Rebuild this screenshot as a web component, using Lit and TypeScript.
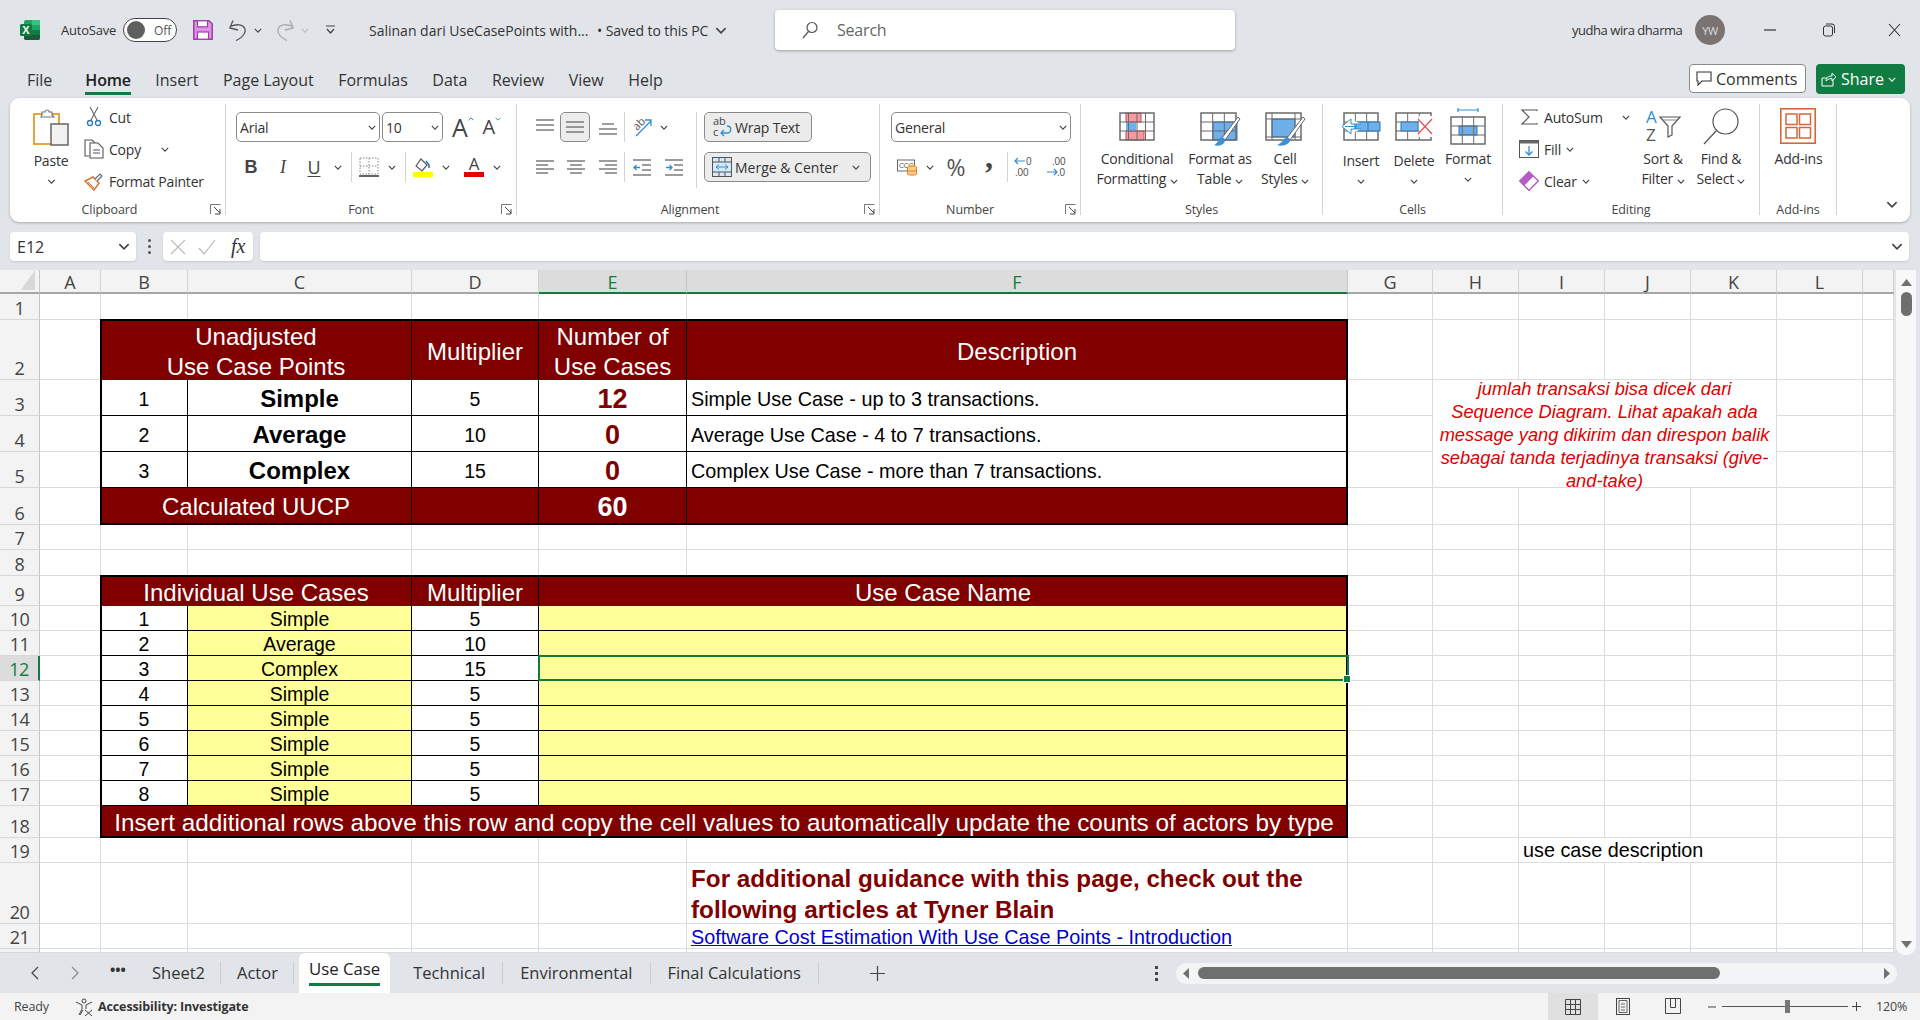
import { LitElement, html, css, svg } from 'lit';
import { customElement } from 'lit/decorators.js';

const UI_FONT = css`"Open Sans", "Noto Sans", sans-serif`;
const GREEN = css`#107c41`;

const chev = (w = 8, color = '#444') => html`<svg width=${w} height=${Math.round(w * 0.6)} viewBox="0 0 10 6"><path d="M1 1l4 4 4-4" fill="none" stroke=${color} stroke-width="1.4"/></svg>`;
const caretUp = html`<svg width="6" height="4" viewBox="0 0 10 6"><path d="M1 5l4-4 4 4" fill="none" stroke="#2e75b6" stroke-width="1.6"/></svg>`;

const lines = (x1: number, x2: number, ys: number[], color = '#666') =>
  ys.map((y) => svg`<path d="M${x1} ${y}H${x2}" stroke=${color} stroke-width="1.3"/>`);

const gridLines = (x: number, y: number, w: number, h: number, nc: number, nr: number) => svg`
  <rect x=${x} y=${y} width=${w} height=${h} fill="none" stroke="#6b6b6b" stroke-width="1.5"/>
  ${Array.from({ length: nc - 1 }, (_, i) => svg`<path d="M${x + ((i + 1) * w) / nc} ${y}V${y + h}" stroke="#6b6b6b"/>`)}
  ${Array.from({ length: nr - 1 }, (_, i) => svg`<path d="M${x} ${y + ((i + 1) * h) / nr}H${x + w}" stroke="#6b6b6b"/>`)}`;

const icons = {
  logo: html`<svg width="20" height="20" viewBox="0 0 20 20">
    <rect x="4" y="0" width="16" height="20" rx="2" fill="#21a366"/>
    <rect x="12" y="0" width="8" height="5" fill="#33c481"/><rect x="12" y="10" width="8" height="5" fill="#107c41"/>
    <path d="M4 15h16v3a2 2 0 0 1-2 2H6a2 2 0 0 1-2-2z" fill="#185c37"/>
    <rect x="0" y="4" width="12" height="12" rx="1.5" fill="#0f7b3f"/>
    <text x="6" y="14" text-anchor="middle" font-family="Liberation Sans" font-weight="700" font-size="11" fill="#fff">X</text>
  </svg>`,
  save: html`<svg width="20" height="20" viewBox="0 0 20 20">
    <path d="M.8.8h15l3.4 3v15.4H.8z" fill="#e391e6" stroke="#9c3fa8" stroke-width="1.5"/>
    <rect x="4.5" y=".8" width="10" height="6" fill="#fff" stroke="#9c3fa8" stroke-width="1.2"/>
    <rect x="4.5" y="12" width="11" height="7.2" fill="#fff" stroke="#9c3fa8" stroke-width="1.2"/>
  </svg>`,
  undo: (c: string, flip = false) => html`<svg width="18" height="21" viewBox="0 0 18 21" class=${flip ? 'flip' : ''}>
    <path d="M4 .5L.8 8 9 10M1 6.5C16 0 23 13 7 20.5" fill="none" stroke=${c} stroke-width="1.3"/>
  </svg>`,
  qat: html`<svg width="9" height="10" viewBox="0 0 9 10"><path d="M0 1h9M1 4l3.5 4 3.5-4" fill="none" stroke="#444" stroke-width="1.2"/></svg>`,
  search: html`<svg width="16" height="18" viewBox="0 0 16 18"><circle cx="10" cy="6.5" r="5" fill="none" stroke="#555" stroke-width="1.2"/><path d="M6.5 10.5L1 17" stroke="#555" stroke-width="1.2"/></svg>`,
  comment: html`<svg width="16" height="15" viewBox="0 0 16 15"><path d="M1 1h14v9H6l-4 4v-4H1z" fill="none" stroke="#333" stroke-width="1.1"/></svg>`,
  share: html`<svg width="16" height="15" viewBox="0 0 16 15"><path d="M12 8v6H1V6h5M5 9c0-4 3-5 6-5V1l4 4-4 4V6.5c-2 0-4 .5-6 2.5z" fill="none" stroke="#fff" stroke-width="1"/></svg>`,
  paste: html`<svg width="36" height="38" viewBox="0 0 36 38">
    <path d="M1 6h25v30H1z" fill="#fff" stroke="#e8a33d" stroke-width="2"/>
    <path d="M9 7V4h3a2 2 0 0 1 4 0h3v3l2 2H8z" fill="#fff" stroke="#777" stroke-width="1.2"/>
    <rect x="18" y="16" width="17" height="21" fill="#f2f2f2" stroke="#666" stroke-width="1.5"/>
  </svg>`,
  cut: html`<svg width="14" height="20" viewBox="0 0 14 20">
    <path d="M3 0l7 13M11 0L4 13" stroke="#666" fill="none" stroke-width="1.1"/>
    <circle cx="3" cy="16" r="2.5" fill="none" stroke="#2e75b6" stroke-width="1.3"/><circle cx="11" cy="16" r="2.5" fill="none" stroke="#2e75b6" stroke-width="1.3"/>
  </svg>`,
  copy: html`<svg width="20" height="20" viewBox="0 0 20 20">
    <path d="M5 17H1V1h7l3 3" fill="#fff" stroke="#555" stroke-width="1.1"/>
    <path d="M6 4h8l5 5v10H6z" fill="#fff" stroke="#555" stroke-width="1.1"/>
    <path d="M9 11h7M9 14h7" stroke="#555"/>
  </svg>`,
  painter: html`<svg width="20" height="19" viewBox="0 0 20 19">
    <path d="M1 9l8-4 6 6-5 7z" fill="#fff" stroke="#d9782d" stroke-width="1.5"/>
    <path d="M11 7l5-5 2 2-5 5" fill="#fff" stroke="#666" stroke-width="1.1"/><path d="M4 10l6 6" stroke="#d9782d"/>
  </svg>`,
  launcher: html`<svg width="11" height="11" viewBox="0 0 11 11"><path d="M.5 10V.5H10.5" fill="none" stroke="#777"/><path d="M4 3l6 6M10 5v5H5" fill="none" stroke="#444"/></svg>`,
  border: html`<svg width="20" height="20" viewBox="0 0 20 20"><path d="M1 1h18v16H1zM10 1v16M1 9h18" fill="none" stroke="#888" stroke-dasharray="1.5 1.5"/><path d="M0 19h20" stroke="#333" stroke-width="1.5"/></svg>`,
  fill: html`<svg width="20" height="21" viewBox="0 0 20 21"><path d="M3 9l5-7 6 6-5 6z" fill="#fff" stroke="#555" stroke-width="1.2"/><path d="M13 4l3 4v3" fill="none" stroke="#2e75b6" stroke-width="1.6"/><rect y="15" width="20" height="5" fill="#ffff00"/></svg>`,
  color: html`<svg width="20" height="21" viewBox="0 0 20 21"><text x="10" y="13" text-anchor="middle" font-family="Open Sans" font-size="17" fill="#444">A</text><rect y="15" width="20" height="5" fill="#e60000"/></svg>`,
  orient: html`<svg width="21" height="19" viewBox="0 0 21 19"><text transform="translate(5 13) rotate(-45)" font-family="Open Sans" font-size="11" fill="#555">ab</text><path d="M4 18L19 3M13 2h6v6" fill="none" stroke="#2e8fd0" stroke-width="1.3"/></svg>`,
  indentL: html`<svg width="18" height="17" viewBox="0 0 18 17">${lines(0, 18, [1, 16])}${lines(9, 18, [6, 11])}<path d="M7 8.5H1M3.5 6L1 8.5 3.5 11" fill="none" stroke="#2e8fd0" stroke-width="1.3"/></svg>`,
  indentR: html`<svg width="18" height="17" viewBox="0 0 18 17">${lines(0, 18, [1, 16])}${lines(9, 18, [6, 11])}<path d="M1 8.5h6M4.5 6L7 8.5 4.5 11" fill="none" stroke="#2e8fd0" stroke-width="1.3"/></svg>`,
  wrap: html`<svg width="20" height="24" viewBox="0 0 20 24"><text x="1" y="10" font-family="Open Sans" font-size="11" fill="#444">ab</text><text x="1" y="21" font-family="Open Sans" font-size="11" fill="#444">c</text><path d="M15 11c5 0 5 7 0 7H9M12 15l-3 3 3 3" fill="none" stroke="#2e8fd0" stroke-width="1.3"/></svg>`,
  merge: html`<svg width="20" height="20" viewBox="0 0 20 20"><rect x=".5" y=".5" width="19" height="19" fill="#d6e9f8" stroke="#555"/><path d="M.5 5h19M.5 15h19M7 .5V5M13 .5V5M7 15v4.5M13 15v4.5" stroke="#555"/><path d="M4 10h12M7 7.5L4 10l3 2.5M13 7.5l3 2.5-3 2.5" fill="none" stroke="#2e8fd0"/></svg>`,
  account: html`<svg width="20" height="20" viewBox="0 0 20 20"><rect x=".5" y="3" width="17" height="11" fill="#fff" stroke="#666"/><text x="2" y="11" font-family="Liberation Sans" font-size="7" fill="#555">CCC</text><ellipse cx="15" cy="10" rx="4.5" ry="2" fill="#f4a53a"/><path d="M10.5 10v7c0 1.5 9 1.5 9 0v-7" fill="#f9cf91" stroke="#e07f1a"/><path d="M10.5 13c0 1.5 9 1.5 9 0" fill="none" stroke="#e07f1a"/></svg>`,
  incDec: html`<svg width="22" height="24" viewBox="0 0 22 24"><text x="12" y="10" font-family="Liberation Sans" font-size="10" fill="#555">0</text><text x="1" y="21" font-family="Liberation Sans" font-size="10" fill="#555">.00</text><path d="M11 6H1M4 3L1 6l3 3" fill="none" stroke="#2e8fd0" stroke-width="1.2"/></svg>`,
  decDec: html`<svg width="20" height="24" viewBox="0 0 20 24"><text x="5" y="10" font-family="Liberation Sans" font-size="10" fill="#555">.00</text><text x="10" y="21" font-family="Liberation Sans" font-size="10" fill="#555">.0</text><path d="M0 17h10M7 14l3 3-3 3" fill="none" stroke="#2e8fd0" stroke-width="1.2"/></svg>`,
  cf: html`<svg width="36" height="29" viewBox="0 0 36 29">
    <rect x="7" y="1" width="15" height="9" fill="#f59aa3" stroke="#e0434b"/><rect x="7" y="19" width="18" height="9" fill="#f59aa3" stroke="#e0434b"/><rect x="7" y="10" width="10" height="9" fill="#6fb0e8"/>
    ${gridLines(1, 1, 34, 27, 4, 3)}</svg>`,
  fat: html`<svg width="40" height="36" viewBox="0 0 40 36">
    <rect x="13" y="10" width="24" height="18" fill="#6fb0e8" stroke="#2e75b6"/>${gridLines(1, 1, 35, 27, 3, 3)}
    <path d="M38 5L22 26l3 2L40 7z" fill="#fff" stroke="#666"/><path d="M14 33c6 2 11-1 11-5 0-2-3-3-5-2-2 2-2 5-6 7z" fill="#3f8fd6"/></svg>`,
  cstyle: html`<svg width="40" height="36" viewBox="0 0 40 36">
    <rect x="7" y="7" width="23" height="18" fill="#6fb0e8" stroke="#2e75b6"/>
    <rect x="1" y="1" width="35" height="27" fill="none" stroke="#6b6b6b" stroke-width="1.5"/><path d="M7 1v27M30 1v27M1 7h35M1 25h35" stroke="#6b6b6b" fill="none"/>
    <path d="M38 5L22 26l3 2L40 7z" fill="#fff" stroke="#666"/><path d="M12 33c6 2 13-1 13-5 0-2-3-3-5-2-2 2-3 5-8 7z" fill="#3f8fd6"/></svg>`,
  insert: html`<svg width="40" height="29" viewBox="0 0 40 29">${gridLines(3, 1, 34, 27, 3, 3)}
    <rect x="14" y="10" width="25" height="9" fill="#6fb0e8" stroke="#2e75b6"/><path d="M27 10v9" stroke="#2e75b6"/>
    <path d="M16 14.5H4M10 7L1 14.5 10 22M10 7v5h10M10 22v-5h10" fill="#fff" stroke="#2e8fd0"/></svg>`,
  del: html`<svg width="38" height="29" viewBox="0 0 38 29">${gridLines(1, 1, 35, 27, 3, 3)}
    <rect x="6" y="10" width="17" height="9" fill="#6fb0e8" stroke="#2e75b6"/><rect x="24" y="4" width="14" height="21" fill="#fff"/>
    <path d="M23 7l14 15M37 7L23 22" stroke="#e8525a" stroke-width="1.3"/></svg>`,
  format: html`<svg width="36" height="37" viewBox="0 0 36 37"><path d="M8 2h20M8 0v4M28 0v4" stroke="#2e8fd0" stroke-width="1.2"/>
    <rect x="9" y="18" width="18" height="9" fill="#6fb0e8" stroke="#2e75b6"/>${gridLines(1, 9, 34, 27, 3, 3)}</svg>`,
  sigma: html`<svg width="17" height="16" viewBox="0 0 17 16"><path d="M16 2V1H1l7 7-7 7h15v-1" fill="none" stroke="#555" stroke-width="1.2"/></svg>`,
  fillDown: html`<svg width="20" height="18" viewBox="0 0 20 18"><rect x=".5" y=".5" width="19" height="17" fill="#fff" stroke="#555"/><rect x=".5" y=".5" width="19" height="3" fill="#666"/><path d="M10 6v9M6.5 11.5L10 15l3.5-3.5" fill="none" stroke="#2e8fd0" stroke-width="1.3"/></svg>`,
  clear: html`<svg width="20" height="20" viewBox="0 0 20 20"><path d="M10 .7L19.3 10 10 19.3.7 10z" fill="#fff" stroke="#a64bb5" stroke-width="1.2"/><path d="M.7 10L10 .7l4.6 4.6L5.3 14.6z" fill="#b65cc6"/></svg>`,
  sort: html`<svg width="36" height="36" viewBox="0 0 36 36"><text x="1" y="15" font-family="Open Sans" font-size="17" fill="#2e8fd0">A</text><text x="1" y="33" font-family="Open Sans" font-size="17" fill="#555">Z</text>
    <path d="M15 9h20l-8 9v9l-4 2V18z" fill="#fff" stroke="#555" stroke-width="1.2"/><path d="M18 12h14" stroke="#888"/></svg>`,
  find: html`<svg width="36" height="37" viewBox="0 0 36 37"><circle cx="22.5" cy="13.5" r="12.5" fill="none" stroke="#555" stroke-width="1.2"/><path d="M13.5 22.5L1 36" stroke="#555" stroke-width="1.2"/></svg>`,
  addins: html`<svg width="36" height="36" viewBox="0 0 36 36"><rect x=".8" y=".8" width="34.4" height="34.4" fill="#fff" stroke="#d9663a" stroke-width="1.6"/><rect x="6" y="6" width="11" height="10.5" fill="none" stroke="#d9663a" stroke-width="1.5"/><rect x="19.5" y="6" width="11" height="10.5" fill="none" stroke="#d9663a" stroke-width="1.5"/><rect x="6" y="19.5" width="11" height="10.5" fill="none" stroke="#d9663a" stroke-width="1.5"/><rect x="19.5" y="19.5" width="11" height="10.5" fill="none" stroke="#d9663a" stroke-width="1.5"/></svg>`,
  accessibility: html`<svg width="18" height="18" viewBox="0 0 18 18"><circle cx="9" cy="3" r="2" fill="none" stroke="#444"/><path d="M1 4l6 3v4l-3 6M17 4l-6 3v4M8 12l-3 5" fill="none" stroke="#444"/><path d="M10 12l7 6M17 12l-7 6" stroke="#444"/></svg>`,
};

const alignIcon = (ys: number[], xs: [number, number][]) => html`<svg width="18" height="17" viewBox="0 0 18 17">${ys.map((y, i) => svg`<path d="M${xs[i][0]} ${y}H${xs[i][1]}" stroke="#666" stroke-width="1.3"/>`)}</svg>`;
const aFull: [number, number] = [0, 18];

@customElement('title-bar')
class TitleBar extends LitElement {
  static styles = css`
    :host { display: flex; height: 60px; align-items: center; font: 13px ${UI_FONT}; color: #333; }
    .left { width: 775px; padding-left: 20px; box-sizing: border-box; display: flex; align-items: center; flex: none; }
    .auto { margin-left: 21px; letter-spacing: -0.2px; width: 62px; }
    .toggle { width: 54px; height: 24px; box-sizing: border-box; border: 1px solid #444; border-radius: 12px; background: #fff; display: flex; align-items: center; padding-left: 3px; font-size: 12px; color: #555; }
    .knob { width: 18px; height: 18px; border-radius: 50%; background: #5f5f5f; margin-right: 9px; }
    .save { margin-left: 16px; display: flex; }
    .undo { margin-left: 16px; display: flex; }
    .mini { margin-left: 7px; display: flex; }
    .redo { margin-left: 14px; display: flex; }
    .qat { margin-left: 17px; display: flex; }
    .flip { transform: scaleX(-1); }
    .doc { margin-left: 34px; font-size: 14px; white-space: nowrap; width: 219px; }
    .dot { margin-left: 9px; font-size: 14px; white-space: nowrap; letter-spacing: -0.1px; }
    .docchev { margin-left: 7px; display: flex; }
    .search { width: 460px; height: 40px; flex: none; background: #fff; border-radius: 4px; box-shadow: 0 1px 3px rgba(0,0,0,.3); display: flex; align-items: center; padding-left: 27px; box-sizing: border-box; font-size: 16px; color: #666; }
    .search span { margin-left: 19px; letter-spacing: -0.2px; }
    .right { flex: 1; display: flex; align-items: center; }
    .user { margin-left: 337px; font-size: 13px; letter-spacing: -0.45px; width: 123px; white-space: nowrap; }
    .avatar { width: 30px; height: 30px; border-radius: 50%; background: #7b7372; color: #ddd; font-size: 11px; display: flex; align-items: center; justify-content: center; letter-spacing: -0.5px; }
    .win { margin-left: 39px; display: flex; }
    .win.r { margin-left: 47px; }
    .win.c { margin-left: 53px; }
  `;
  render() {
    return html`
      <div class="left">
        ${icons.logo}
        <span class="auto">AutoSave</span>
        <div class="toggle"><div class="knob"></div>Off</div>
        <div class="save">${icons.save}</div>
        <div class="undo">${icons.undo('#555')}</div>
        <div class="mini">${chev(8)}</div>
        <div class="redo">${icons.undo('#aaa', true)}</div>
        <div class="mini">${chev(8, '#bbb')}</div>
        <div class="qat">${icons.qat}</div>
        <span class="doc">Salinan dari UseCasePoints with...</span>
        <span class="dot">• Saved to this PC</span>
        <div class="docchev">${chev(12)}</div>
      </div>
      <div class="search">${icons.search}<span>Search</span></div>
      <div class="right">
        <span class="user">yudha wira dharma</span>
        <div class="avatar">YW</div>
        <div class="win"><svg width="12" height="2"><path d="M0 1h12" stroke="#333" stroke-width="1.2"/></svg></div>
        <div class="win r"><svg width="12" height="14" viewBox="0 0 12 14"><rect x=".5" y="3" width="9" height="10" rx="2" fill="none" stroke="#333"/><path d="M3 1h6a2.5 2.5 0 0 1 2.5 2.5V10" fill="none" stroke="#333"/></svg></div>
        <div class="win c"><svg width="13" height="14" viewBox="0 0 13 14"><path d="M1 1l11 12M12 1L1 13" stroke="#333" stroke-width="1.1"/></svg></div>
      </div>
    `;
  }
}

@customElement('menu-tabs')
class MenuTabs extends LitElement {
  static styles = css`
    :host { display: flex; height: 38px; padding-left: 27px; padding-right: 15px; align-items: flex-start; font: 16px ${UI_FONT}; color: #333; }
    .tab { padding-top: 8px; height: 24px; line-height: 24px; margin-right: 24.5px; white-space: nowrap; }
    .tab.file { margin-right: 33px; }
    .tab.on { font-weight: 600; border-bottom: 3px solid ${GREEN}; color: #222; letter-spacing: -0.2px; }
    .side { margin-left: auto; display: flex; gap: 10px; padding-top: 4px; }
    .cmt, .shr { height: 29px; box-sizing: border-box; border-radius: 4px; display: flex; align-items: center; }
    .cmt { width: 117px; border: 1px solid #8a8a8a; background: #fff; padding-left: 6px; gap: 4px; }
    .shr { width: 89px; background: ${GREEN}; color: #fff; padding-left: 5px; gap: 4px; height: 30px; }
  `;
  render() {
    const tabs = ['File', 'Home', 'Insert', 'Page Layout', 'Formulas', 'Data', 'Review', 'View', 'Help'];
    return html`
      ${tabs.map((t) => html`<div class="tab ${t === 'Home' ? 'on' : ''} ${t === 'File' ? 'file' : ''}">${t}</div>`)}
      <div class="side">
        <div class="cmt">${icons.comment}<span>Comments</span></div>
        <div class="shr">${icons.share}<span>Share</span>${chev(8, '#fff')}</div>
      </div>
    `;
  }
}

@customElement('ribbon-bar')
class RibbonBar extends LitElement {
  static styles = css`
    :host { display: flex; height: 124px; margin: 0 10px; background: #fff; border-radius: 9px; box-shadow: 0 1px 3px rgba(0,0,0,.25); font: 14px ${UI_FONT}; color: #333; letter-spacing: -0.2px; }
    svg { overflow: visible; }
    .group { height: 111px; margin-top: 6px; border-right: 1px solid #d4d4d4; box-sizing: border-box; position: relative; flex: none; display: flex; flex-direction: column; }
    .body { height: 96px; flex: none; display: flex; }
    .label { text-align: center; font-size: 12.5px; line-height: 18px; color: #444; letter-spacing: -0.1px; padding-top: 1px; }
    .launch { position: absolute; right: 4px; bottom: 0; display: flex; }
    .clip { width: 216px; } .font { width: 291px; } .align { width: 363px; } .num { width: 201px; }
    .styles { width: 242px; } .cells { width: 180px; } .edit { width: 257px; } .adds { width: 77px; }
    .clip .label { padding-right: 16px; } .font .label { padding-right: 20px; }
    .align .label { padding-right: 16px; } .num .label { padding-right: 20px; }
    .col { display: flex; flex-direction: column; }
    .rows { padding-top: 8px; gap: 10px; box-sizing: border-box; }
    .row { display: flex; align-items: center; height: 30px; flex: none; }
    .cell { display: flex; align-items: center; justify-content: center; height: 30px; flex: none; }
    .sep { width: 1px; height: 30px; background: #d4d4d4; flex: none; }
    .big { display: flex; flex-direction: column; align-items: center; padding-top: 4px; flex: none; line-height: 20px; text-align: center; white-space: nowrap; }
    .ico { height: 40px; display: flex; align-items: flex-start; justify-content: center; padding-top: 4px; box-sizing: border-box; margin-bottom: 1px; }
    .ico.top { padding-top: 0; }
    .low { margin-top: 2px; }
    .chv { height: 20px; display: flex; align-items: center; justify-content: center; }
    .item { display: flex; align-items: center; height: 32px; white-space: nowrap; gap: 5px; }
    .select { height: 30px; box-sizing: border-box; border: 1px solid #8a8a8a; border-radius: 5px; display: flex; align-items: center; justify-content: space-between; padding: 0 3px; }
    .press { background: #ececec; border: 1px solid #8a8a8a; border-radius: 5px; box-sizing: border-box; }
    .wide { height: 30px; box-sizing: border-box; display: flex; align-items: center; padding-left: 7px; gap: 3px; flex: none; }
    .merge-t { letter-spacing: 0; }
    .bi { font: 700 18px "Liberation Sans", sans-serif; color: #444; }
    .it { font: italic 18px "Liberation Serif", serif; color: #444; }
    .un { font: 18px ${UI_FONT}; color: #444; text-decoration: underline; text-underline-offset: 2px; }
    .aa { font-size: 25px; line-height: 30px; color: #444; position: relative; }
    .aa.sm { font-size: 20px; }
    .aa i { position: absolute; left: 100%; top: 5px; display: flex; }
    .pct { font-size: 23px; color: #555; }
    .cma { font: 700 32px "Liberation Serif", serif; color: #444; line-height: 20px; padding-bottom: 20px; }
    .collapse { margin: 0 12px 14px auto; align-self: flex-end; display: flex; }
    .w20 { width: 20px; display: flex; justify-content: center; }
    .inl { display: flex; }
  `;

  cw(w: number, content: unknown, ml = 0) {
    return html`<div class="cell" style="width:${w}px;margin-left:${ml}px">${content}</div>`;
  }

  render() {
    const sep = (ml = 0) => html`<div class="sep" style="margin-left:${ml}px"></div>`;
    return html`
      <section class="group clip">
        <div class="body">
          <div class="big" style="width:44px;margin-left:19px">
            <div class="ico top">${icons.paste}</div>
            <div class="low">Paste</div>
            <div class="chv">${chev(9)}</div>
          </div>
          <div class="col" style="margin:-3px 0 0 11px">
            <div class="item"><span class="w20">${icons.cut}</span>Cut</div>
            <div class="item"><span class="w20">${icons.copy}</span>Copy<span class="inl" style="margin-left:15px">${chev(8)}</span></div>
            <div class="item"><span class="w20">${icons.painter}</span>Format Painter</div>
          </div>
        </div>
        <div class="label">Clipboard</div>
        <div class="launch">${icons.launcher}</div>
      </section>

      <section class="group font">
        <div class="body col rows" style="padding-left:10px">
          <div class="row">
            <div class="select" style="width:144px"><span>Arial</span>${chev(8)}</div>
            <div class="select" style="width:61px;margin-left:2px"><span>10</span>${chev(8)}</div>
            <div class="aa" style="margin-left:9px">A<i>${caretUp}</i></div>
            <div class="aa sm" style="margin-left:15px">A<i>${chev(6, '#2e75b6')}</i></div>
          </div>
          <div class="row">
            ${this.cw(30, html`<span class="bi">B</span>`)}
            ${this.cw(32, html`<span class="it">I</span>`, 1)}
            ${this.cw(30, html`<span class="un">U</span>`)}
            ${this.cw(18, chev(8))}
            ${sep(4)}
            ${this.cw(33, icons.border)}
            ${this.cw(14, chev(8))}
            ${sep(6)}
            ${this.cw(34, icons.fill)}
            ${this.cw(12, chev(8))}
            ${this.cw(36, icons.color, 4)}
            ${this.cw(10, chev(8))}
          </div>
        </div>
        <div class="label">Font</div>
        <div class="launch">${icons.launcher}</div>
      </section>

      <section class="group align">
        <div class="body">
          <div class="col rows" style="width:179px;padding-left:12px">
            <div class="row">
              ${this.cw(31, alignIcon([1, 6, 11], [aFull, aFull, aFull]))}
              <div class="cell press" style="width:30px;margin-right:2px">${alignIcon([3, 8, 13], [aFull, aFull, aFull])}</div>
              ${this.cw(32, alignIcon([5, 10, 15], [[3, 15], aFull, aFull]))}
              ${sep()}
              ${this.cw(35, icons.orient)}
              ${this.cw(8, chev(8))}
            </div>
            <div class="row">
              ${this.cw(31, alignIcon([2, 6, 10, 14], [aFull, [0, 12], aFull, [0, 12]]))}
              ${this.cw(32, alignIcon([2, 6, 10, 14], [aFull, [3, 15], aFull, [3, 15]]))}
              ${this.cw(32, alignIcon([2, 6, 10, 14], [aFull, [6, 18], aFull, [6, 18]]))}
              ${sep()}
              ${this.cw(34, icons.indentL)}
              ${this.cw(30, icons.indentR)}
            </div>
          </div>
          <div class="sep" style="height:76px;margin-top:8px"></div>
          <div class="col rows" style="padding-left:7px">
            <div class="press wide" style="width:108px">${icons.wrap}<span>Wrap Text</span></div>
            <div class="press wide" style="width:167px">${icons.merge}<span class="merge-t">Merge &amp; Center</span><span class="inl" style="margin-left:11px">${chev(8)}</span></div>
          </div>
        </div>
        <div class="label">Alignment</div>
        <div class="launch">${icons.launcher}</div>
      </section>

      <section class="group num">
        <div class="body col rows" style="padding-left:11px">
          <div class="row"><div class="select" style="width:180px"><span>General</span>${chev(8)}</div></div>
          <div class="row">
            ${this.cw(20, icons.account, 6)}
            ${this.cw(14, chev(8), 6)}
            ${this.cw(30, html`<span class="pct">%</span>`, 4)}
            ${this.cw(30, html`<span class="cma">,</span>`, 3)}
            ${sep(3)}
            ${this.cw(21, icons.incDec, 6)}
            ${this.cw(20, icons.decDec, 12)}
          </div>
        </div>
        <div class="label">Number</div>
        <div class="launch">${icons.launcher}</div>
      </section>

      <section class="group styles">
        <div class="body" style="padding-left:3px">
          <div class="big" style="width:106px"><div class="ico">${icons.cf}</div><div>Conditional</div><div>Formatting ${chev(8)}</div></div>
          <div class="big" style="width:60px"><div class="ico">${icons.fat}</div><div>Format as</div><div>Table ${chev(8)}</div></div>
          <div class="big" style="width:70px"><div class="ico">${icons.cstyle}</div><div>Cell</div><div>Styles ${chev(8)}</div></div>
        </div>
        <div class="label">Styles</div>
      </section>

      <section class="group cells">
        <div class="body" style="padding-left:8px">
          <div class="big" style="width:60px"><div class="ico">${icons.insert}</div><div class="low">Insert</div><div class="chv">${chev(8)}</div></div>
          <div class="big" style="width:46px"><div class="ico">${icons.del}</div><div class="low">Delete</div><div class="chv">${chev(8)}</div></div>
          <div class="big" style="width:62px"><div class="ico top">${icons.format}</div><div>Format</div><div class="chv">${chev(8)}</div></div>
        </div>
        <div class="label">Cells</div>
      </section>

      <section class="group edit">
        <div class="body">
          <div class="col" style="width:131px;padding-left:16px;box-sizing:border-box;margin-top:-3px">
            <div class="item"><span class="w20">${icons.sigma}</span>AutoSum<span class="inl" style="margin-left:14px">${chev(8)}</span></div>
            <div class="item">${icons.fillDown}Fill ${chev(8)}</div>
            <div class="item">${icons.clear}Clear ${chev(8)}</div>
          </div>
          <div class="big" style="width:58px"><div class="ico top">${icons.sort}</div><div>Sort &amp;</div><div>Filter ${chev(8)}</div></div>
          <div class="big" style="width:58px"><div class="ico top">${icons.find}</div><div>Find &amp;</div><div>Select ${chev(8)}</div></div>
        </div>
        <div class="label">Editing</div>
      </section>

      <section class="group adds">
        <div class="body" style="justify-content:center;padding-left:1px">
          <div class="big"><div class="ico top">${icons.addins}</div><div>Add-ins</div></div>
        </div>
        <div class="label">Add-ins</div>
      </section>

      <div class="collapse">${chev(12)}</div>
    `;
  }
}

@customElement('formula-bar')
class FormulaBar extends LitElement {
  static styles = css`
    :host { display: flex; height: 29px; margin: 10px 11px 9px 10px; font: 14px ${UI_FONT}; color: #333; align-items: stretch; }
    .box { background: #fff; border-radius: 4px; box-shadow: 0 1px 2px rgba(0,0,0,.12); display: flex; align-items: center; box-sizing: border-box; }
    .name { width: 126px; padding: 0 6px 0 7px; justify-content: space-between; font-size: 16px; }
    .dots { width: 27px; display: flex; flex-direction: column; align-items: center; justify-content: center; gap: 3px; }
    .dots i { width: 3px; height: 3px; background: #555; border-radius: 50%; display: block; }
    .fx { width: 90px; padding-left: 7px; gap: 12px; }
    .fxt { font: italic 20px "Liberation Serif", serif; color: #333; margin-left: 3px; }
    .input { flex: 1; margin-left: 7px; justify-content: flex-end; padding-right: 6px; }
  `;
  render() {
    return html`
      <div class="box name"><span>E12</span>${chev(12)}</div>
      <div class="dots"><i></i><i></i><i></i></div>
      <div class="box fx">
        <svg width="16" height="16"><path d="M1 1l14 14M15 1L1 15" stroke="#bbb" stroke-width="1.2"/></svg>
        <svg width="18" height="16"><path d="M1 9l5 6L17 1" fill="none" stroke="#bbb" stroke-width="1.2"/></svg>
        <span class="fxt">fx</span>
      </div>
      <div class="box input">${chev(12)}</div>
    `;
  }
}

interface Cell { c: string; r: number; cs?: number; rs?: number; t?: string; k?: string; }

const COLS: string[] = ['A', 'B', 'C', 'D', 'E', 'F', 'G', 'H', 'I', 'J', 'K', 'L', ''];
const ROWS = [26, 60, 36, 36, 36, 37, 25, 26, 30, 25, 25, 25, 25, 25, 25, 25, 25, 32, 25, 61, 25, 4];

const buildCells = (): Cell[] => {
  const m = 'm', b = 'w';
  const out: Cell[] = [
    { c: 'B', r: 2, cs: 2, t: 'Unadjusted\nUse Case Points', k: `${m} lg` },
    { c: 'D', r: 2, t: 'Multiplier', k: `${m} lg` },
    { c: 'E', r: 2, t: 'Number of\nUse Cases', k: `${m} lg` },
    { c: 'F', r: 2, t: 'Description', k: `${m} lg` },
    { c: 'B', r: 6, cs: 2, t: 'Calculated UUCP', k: `${m} lg calc` },
    { c: 'D', r: 6, k: m },
    { c: 'E', r: 6, t: '60', k: `${m} big` },
    { c: 'F', r: 6, k: m },
    { c: 'B', r: 9, cs: 2, t: 'Individual Use Cases', k: `${m} lg` },
    { c: 'D', r: 9, t: 'Multiplier', k: `${m} lg` },
    { c: 'E', r: 9, cs: 2, t: 'Use Case Name', k: `${m} lg` },
    { c: 'B', r: 18, cs: 5, t: 'Insert additional rows above this row and copy the cell values to automatically update the counts of actors by type', k: `${m} note` },
    { c: 'H', r: 3, cs: 4, rs: 3, t: 'jumlah transaksi bisa dicek dari\nSequence Diagram. Lihat apakah ada\nmessage yang dikirim dan direspon balik\nsebagai tanda terjadinya transaksi (give-\nand-take)', k: 'red' },
    { c: 'I', r: 19, cs: 3, t: 'use case description', k: 'plain' },
    { c: 'F', r: 20, t: 'For additional guidance with this page, check out the following articles at Tyner Blain', k: 'guide' },
    { c: 'F', r: 21, t: 'Software Cost Estimation With Use Case Points - Introduction', k: 'link' },
  ];
  const top = [['Simple', '5', '12', 'Simple Use Case - up to 3 transactions.'], ['Average', '10', '0', 'Average Use Case - 4 to 7 transactions.'], ['Complex', '15', '0', 'Complex Use Case - more than 7 transactions.']];
  top.forEach((row, i) => {
    const r = 3 + i;
    out.push(
      { c: 'B', r, t: String(i + 1), k: `${b} mid` },
      { c: 'C', r, t: row[0], k: `${b} bold` },
      { c: 'D', r, t: row[1], k: `${b} mid` },
      { c: 'E', r, t: row[2], k: `${b} count` },
      { c: 'F', r, t: row[3], k: `${b} desc` },
    );
  });
  const list = ['Simple', 'Average', 'Complex', 'Simple', 'Simple', 'Simple', 'Simple', 'Simple'];
  const mult = ['5', '10', '15', '5', '5', '5', '5', '5'];
  list.forEach((kind, i) => {
    const r = 10 + i;
    out.push(
      { c: 'B', r, t: String(i + 1), k: `${b} mid` },
      { c: 'C', r, t: kind, k: 'y mid' },
      { c: 'D', r, t: mult[i], k: `${b} mid` },
      { c: 'E', r, cs: 2, k: 'y' },
    );
  });
  return out;
};

@customElement('sheet-grid')
class SheetGrid extends LitElement {
  static styles = css`
    :host { display: grid; width: 1894px; height: 683px; overflow: hidden; background: #fff; grid-template-columns: 40px 61px 87px 224px 127px 148px 661px 85px 86px 86px 86px 86px 86px 31px; grid-template-rows: 24px 26px 60px 36px 36px 36px 37px 25px 26px 30px repeat(8, 25px) 32px 25px 61px 25px 4px; font: 20px "Liberation Sans", Arial, sans-serif; color: #000; flex: none; }
    .corner { background: #f3f3f3; border-right: 1px solid #c6c6c6; border-bottom: 2px solid #a6a6a6; box-sizing: border-box; display: flex; justify-content: flex-end; padding: 0 4px 2px 0; }
    .corner i { width: 14px; height: 20px; background: #d8d8d8; clip-path: polygon(100% 0, 100% 100%, 0 100%); display: block; }
    .ch { background: #f3f3f3; border-right: 1px solid #d2d2d2; border-bottom: 2px solid #a6a6a6; box-sizing: border-box; display: flex; align-items: center; justify-content: center; font: 18px ${UI_FONT}; color: #444; padding-top: 2px; }
    .ch.sel { background: #dcdcdc; color: #107c41; border-bottom-color: ${GREEN}; border-right-color: #c4c4c4; }
    .rh { background: #f3f3f3; border-right: 1px solid #c6c6c6; border-bottom: 1px solid #d8d8d8; box-sizing: border-box; display: flex; align-items: flex-end; justify-content: center; font: 18px/22px ${UI_FONT}; color: #444; letter-spacing: -0.5px; overflow: hidden; }
    .rh.sel { background: #dcdcdc; color: #107c41; border-right: 2px solid ${GREEN}; }
    .g { border-right: 1px solid #dcdcdc; border-bottom: 1px solid #dcdcdc; box-sizing: border-box; }
    .c { box-sizing: border-box; display: flex; align-items: center; justify-content: center; text-align: center; white-space: pre-line; border-right: 1px solid #000; border-bottom: 1px solid #000; z-index: 1; line-height: 1; }
    .m { background: #800000; color: #fff; border-bottom: 0; }
    .lg { font-size: 24px; line-height: 30px; padding-top: 4px; }
    .calc { padding-top: 1px; }
    .big { font-size: 27px; font-weight: 700; padding-top: 2px; }
    .note { font-size: 24.3px; padding-top: 2px; }
    .w { background: #fff; }
    .y { background: #ffff99; }
    .mid { font-size: 19.5px; padding-top: 4px; }
    .bold { font-size: 24px; font-weight: 700; padding-top: 2px; }
    .count { font-size: 27px; font-weight: 700; color: #800000; padding-top: 3px; }
    .desc { justify-content: flex-start; padding: 4px 0 0 4px; font-size: 19.8px; white-space: nowrap; }
    .red { background: #fff; color: #e00000; font-style: italic; font-size: 18.25px; line-height: 23px; border: 0; border-bottom: 1px solid #dcdcdc; border-right: 1px solid #dcdcdc; white-space: pre-line; padding-top: 2px; }
    .plain { background: #fff; border: 0; border-right: 1px solid #dcdcdc; border-bottom: 1px solid #dcdcdc; justify-content: flex-start; padding: 2px 0 0 4px; white-space: nowrap; font-size: 19.8px; }
    .guide { background: #fff; border: 0; border-bottom: 1px solid #dcdcdc; border-right: 1px solid #dcdcdc; align-items: flex-end; text-align: left; justify-content: flex-start; padding-left: 4px; font-weight: 700; font-size: 24.25px; line-height: 31px; color: #800000; white-space: normal; }
    .guide span { margin-bottom: -2px; }
    .link { background: #fff; border: 0; border-right: 1px solid #dcdcdc; border-bottom: 1px solid #dcdcdc; justify-content: flex-start; padding: 4px 0 0 4px; white-space: nowrap; color: #0000d4; text-decoration: underline; font-size: 19.8px; }
    .frame { border: 2px solid #000; margin: -1px 0 0 -1px; z-index: 2; box-sizing: border-box; }
    .cursor { border: 2px solid #107c41; margin: -1px -1px 0 -1px; z-index: 3; position: relative; }
    .cursor::after { content: ''; position: absolute; right: -4px; bottom: -4px; width: 6px; height: 6px; background: ${GREEN}; border: 1px solid #fff; }
  `;

  colIdx(letter: string) { return COLS.indexOf(letter) + 2; }

  area(c: number, r: number, cs = 1, rs = 1) {
    return `grid-column:${c}/span ${cs};grid-row:${r + 1}/span ${rs}`;
  }

  render() {
    const cells = buildCells();
    const used = new Set<string>();
    cells.forEach((x) => {
      const ci = this.colIdx(x.c);
      for (let i = 0; i < (x.cs ?? 1); i++) for (let j = 0; j < (x.rs ?? 1); j++) used.add(`${ci + i}:${x.r + j}`);
    });
    return html`
      <div class="corner"><i></i></div>
      ${COLS.map((l, i) => html`<div class="ch ${l === 'E' || l === 'F' ? 'sel' : ''}" style="grid-column:${i + 2};grid-row:1">${l}</div>`)}
      ${ROWS.map((_, i) => html`<div class="rh ${i + 1 === 12 ? 'sel' : ''}" style=${this.area(1, i + 1)}>${i < 21 ? i + 1 : ''}</div>`)}
      ${ROWS.flatMap((_, ri) => COLS.map((__, ci) => used.has(`${ci + 2}:${ri + 1}`) ? null : html`<div class="g" style=${this.area(ci + 2, ri + 1)}></div>`))}
      ${cells.map((x) => html`<div class="c ${x.k ?? ''}" style=${this.area(this.colIdx(x.c), x.r, x.cs, x.rs)}>${x.t ? html`<span>${x.t}</span>` : ''}</div>`)}
      <div class="frame" style=${this.area(3, 2, 5, 5)}></div>
      <div class="frame" style=${this.area(3, 9, 5, 10)}></div>
      <div class="cursor" style=${this.area(6, 12, 2, 1)}></div>
    `;
  }
}

@customElement('v-scroll')
class VScroll extends LitElement {
  static styles = css`
    :host { display: flex; flex-direction: column; align-items: center; width: 20px; height: 685px; background: #f8f8f8; border-radius: 0 0 9px 9px; margin: 0 4px 0 2px; box-sizing: border-box; padding-top: 9px; flex: none; }
    .thumb { width: 11px; height: 24px; background: #6f6f6f; border-radius: 6px; margin-top: 6px; }
    .end { margin-top: auto; margin-bottom: 7px; display: flex; }
  `;
  render() {
    return html`
      <svg width="11" height="7"><path d="M5.5 0L11 7H0z" fill="#707070"/></svg>
      <div class="thumb"></div>
      <div class="end"><svg width="11" height="7"><path d="M5.5 7L11 0H0z" fill="#707070"/></svg></div>
    `;
  }
}

@customElement('sheet-tabs')
class SheetTabs extends LitElement {
  static styles = css`
    :host { display: flex; height: 40px; font: 16.5px ${UI_FONT}; color: #333; align-items: center; }
    .nav { display: flex; align-items: center; width: 136px; flex: none; padding-left: 30px; box-sizing: border-box; gap: 32px; }
    .more { font-weight: 700; font-size: 14px; line-height: 10px; padding-bottom: 6px; margin-left: -2px; }
    .tabs { display: flex; align-items: stretch; height: 40px; }
    .tab { padding: 0 17px; border-right: 1px solid #c8cdd1; height: 22px; margin: 9px 0; line-height: 22px; white-space: nowrap; }
    .tab.tight { padding: 0 15px 0 16px; }
    .tab.on { background: #fff; height: 40px; margin: 0 6px 0 5px; padding: 0 10px; border: 0; border-radius: 6px 6px 0 0; line-height: 32px; display: block; position: relative; font-weight: 500; color: #222; font-size: 16.8px; }
    .tab.on::after { content: ''; position: absolute; left: 10px; right: 10px; top: 30px; height: 3px; background: ${GREEN}; }
    .add { margin-left: 51px; display: flex; }
    .vdots { margin-left: auto; display: flex; flex-direction: column; gap: 3px; margin-right: 18px; }
    .vdots i { width: 3px; height: 3px; background: #444; display: block; }
    .track { width: 721px; height: 21px; margin-right: 23px; border-radius: 10px; background: #f3f4f5; display: flex; align-items: center; padding: 0 7px; box-sizing: border-box; }
    .thumb { width: 522px; height: 12px; background: #6f6f6f; border-radius: 6px; margin-left: 9px; }
    .arr { margin-left: auto; display: flex; }
  `;
  render() {
    return html`
      <div class="nav">
        <svg width="9" height="14"><path d="M8 1L2 7l6 6" fill="none" stroke="#444" stroke-width="1.2"/></svg>
        <svg width="9" height="14"><path d="M1 1l6 6-6 6" fill="none" stroke="#888" stroke-width="1.2"/></svg>
        <span class="more">•••</span>
      </div>
      <div class="tabs">
        <div class="tab tight">Sheet2</div>
        <div class="tab tight">Actor</div>
        <div class="tab on">Use Case</div>
        <div class="tab">Technical</div>
        <div class="tab">Environmental</div>
        <div class="tab">Final Calculations</div>
      </div>
      <div class="add"><svg width="15" height="15"><path d="M7.5 0v15M0 7.5h15" stroke="#444" stroke-width="1.2"/></svg></div>
      <div class="vdots"><i></i><i></i><i></i></div>
      <div class="track">
        <svg width="6" height="11"><path d="M6 0v11L0 5.5z" fill="#707070"/></svg>
        <div class="thumb"></div>
        <div class="arr"><svg width="6" height="11"><path d="M0 0v11l6-5.5z" fill="#707070"/></svg></div>
      </div>
    `;
  }
}

@customElement('status-bar')
class StatusBar extends LitElement {
  static styles = css`
    :host { display: flex; height: 27px; background: #f3f3f3; font: 12.5px ${UI_FONT}; color: #444; align-items: center; letter-spacing: -0.15px; }
    .ready { margin-left: 14px; width: 61px; }
    .acc { display: flex; align-items: center; gap: 5px; font-weight: 700; letter-spacing: -0.12px; color: #333; }
    .right { margin-left: auto; display: flex; align-items: center; height: 100%; }
    .view { height: 100%; display: flex; align-items: center; justify-content: center; width: 50px; }
    .view.on { background: #e0e0e0; }
    .slider { display: flex; align-items: center; margin-left: 10px; }
    .rail { width: 126px; height: 1px; background: #555; margin: 0 4px 0 6px; display: flex; align-items: center; justify-content: center; }
    .rail i { width: 5px; height: 13px; background: #777; display: block; margin-left: 4px; flex: none; }
    .zoom { margin: 0 13px 0 15px; width: 31px; }
  `;
  render() {
    return html`
      <span class="ready">Ready</span>
      <div class="acc">${icons.accessibility}<span>Accessibility: Investigate</span></div>
      <div class="right">
        <div class="view on"><svg width="16" height="16" viewBox="0 0 16 16"><path d="M.5.5h15v15H.5zM5.5.5v15M10.5.5v15M.5 5.5h15M.5 10.5h15" fill="none" stroke="#444"/></svg></div>
        <div class="view"><svg width="14" height="17" viewBox="0 0 14 17"><rect x=".5" y=".5" width="13" height="16" fill="none" stroke="#444"/><path d="M3 2.5h8v12H3zM5 6h4M5 9h4M5 12h4" fill="none" stroke="#666"/></svg></div>
        <div class="view"><svg width="16" height="17" viewBox="0 0 16 17"><path d="M.5.5h15v15H.5zM5.5.5v9h5v-9" fill="none" stroke="#444"/></svg></div>
        <div class="slider">
          <svg width="8" height="2"><path d="M0 1h8" stroke="#444"/></svg>
          <div class="rail"><i></i></div>
          <svg width="9" height="9"><path d="M4.5 0v9M0 4.5h9" stroke="#444"/></svg>
        </div>
        <span class="zoom">120%</span>
      </div>
    `;
  }
}

@customElement('app-root')
export class AppRoot extends LitElement {
  static styles = css`
    :host { display: block; width: 1920px; height: 1020px; overflow: hidden; background: #e1e5e9; }
    .sheet { display: flex; height: 683px; }
  `;
  render() {
    return html`
      <title-bar></title-bar>
      <menu-tabs></menu-tabs>
      <ribbon-bar></ribbon-bar>
      <formula-bar></formula-bar>
      <div class="sheet">
        <sheet-grid></sheet-grid>
        <v-scroll></v-scroll>
      </div>
      <sheet-tabs></sheet-tabs>
      <status-bar></status-bar>
    `;
  }
}
